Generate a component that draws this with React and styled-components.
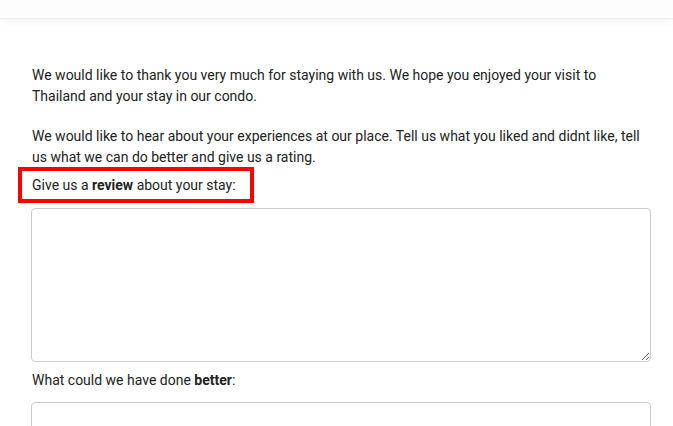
import React from "react";
import styled, { createGlobalStyle } from "styled-components";

const GlobalStyle = createGlobalStyle`
  body {
    margin: 0;
    background: #fff;
    font-family: Roboto, "Liberation Sans", sans-serif;
    color: #222;
  }
`;

const TopBar = styled.div`
  height: 18px;
  background: #fdfdfd;
  box-shadow: 0 2px 8px rgba(0, 0, 0, 0.06);
  border-bottom: 1px solid #f0f0f0;
`;

const Content = styled.div`
  padding: 46px 22px 0 31px;
  font-size: 14px;
  line-height: 20.5px;
`;

const Para = styled.p`
  margin: 0 0 20px 1px;
  &:last-of-type {
    margin-bottom: 0;
  }
`;

const Label = styled.div`
  display: inline-block;
  margin: ${(p) => (p.$marked ? "0 0 5.5px -13px" : "8px 0 11px 1px")};
  padding: ${(p) => (p.$marked ? "4px 14px 3px 10px" : "0")};
  border: ${(p) => (p.$marked ? "4px solid #f00" : "none")};
`;

const TextArea = styled.textarea`
  display: block;
  box-sizing: border-box;
  width: 100%;
  height: ${(p) => p.$height}px;
  border: 1px solid #ccc;
  border-radius: 4px;
  background: #fff;
  resize: vertical;
  font: inherit;
`;

export default function App() {
  return (
    <>
      <GlobalStyle />
      <TopBar />
      <Content>
        <Para>
          We would like to thank you very much for staying with us. We hope you
          enjoyed your visit to Thailand and your stay in our condo.
        </Para>
        <Para>
          We would like to hear about your experiences at our place. Tell us
          what you liked and didnt like, tell us what we can do better and give
          us a rating.
        </Para>
        <Label $marked>
          Give us a <b>review</b> about your stay:
        </Label>
        <TextArea $height={154} />
        <Label>
          What could we have done <b>better</b>:
        </Label>
        <TextArea $height={80} />
      </Content>
    </>
  );
}
